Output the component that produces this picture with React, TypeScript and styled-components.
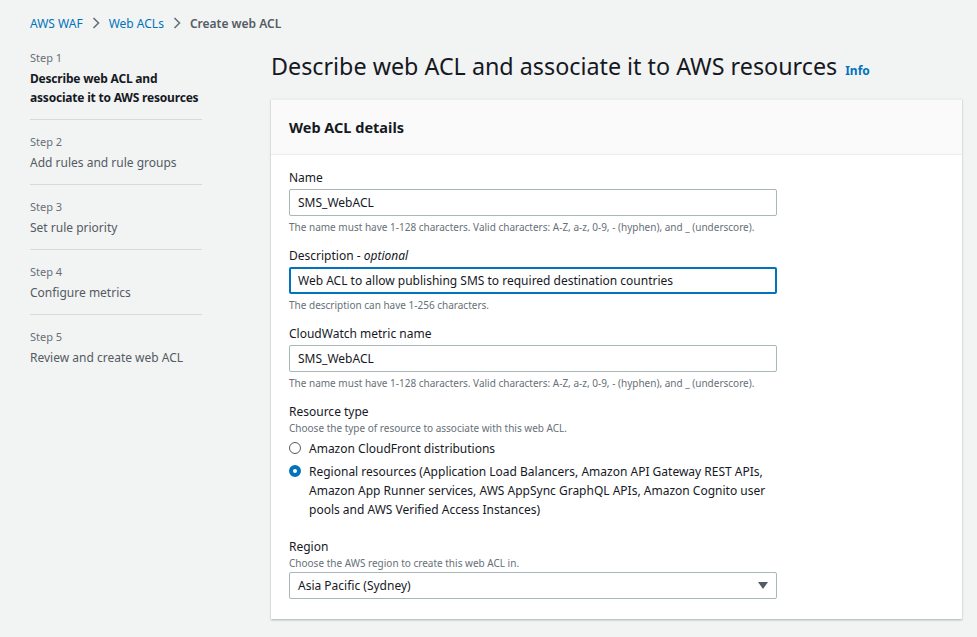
import React from 'react'
import styled, { createGlobalStyle } from 'styled-components'

const Global = createGlobalStyle`
  body { margin: 0; background: #f2f3f3; font-family: "Noto Sans", "Open Sans", sans-serif; color: #16191f; }
`

const Page = styled.div`
  width: 977px;
  height: 637px;
  overflow: hidden;
  padding: 14px 0 0 30px;
  box-sizing: border-box;
`

const Crumbs = styled.nav`
  display: flex;
  align-items: center;
  gap: 9px;
  font-size: 12px;
  height: 18px;
`

const Crumb = styled.span<{ $current?: boolean }>`
  color: ${({ $current }) => ($current ? '#545b64' : '#0073bb')};
  font-weight: ${({ $current }) => ($current ? 600 : 400)};
`

const Body = styled.div`
  display: flex;
  margin-top: 16px;
`

const Side = styled.aside`
  width: 172px;
  margin-right: 69px;
  flex-shrink: 0;
`

const StepItem = styled.div<{ $last?: boolean }>`
  padding: 2px 0 ${({ $last }) => ($last ? 0 : '12px')};
  margin-bottom: 12px;
  border-bottom: ${({ $last }) => ($last ? 'none' : '1px solid #d5dbdb')};
`

const StepNum = styled.div`
  font-size: 11px;
  color: #687078;
  line-height: 16px;
  margin-bottom: 3px;
`

const StepName = styled.div<{ $active?: boolean }>`
  font-size: 12px;
  line-height: 19px;
  color: ${({ $active }) => ($active ? '#16191f' : '#545b64')};
  font-weight: ${({ $active }) => ($active ? 700 : 400)};
  letter-spacing: ${({ $active }) => ($active ? '-0.2px' : '0')};
`

const Main = styled.main`
  flex: 1;
  padding-right: 15px;
`

const Title = styled.h1`
  margin: 2px 0 12px;
  font-size: 23.3px;
  font-weight: 400;
  line-height: 32px;
  display: flex;
  align-items: baseline;
  gap: 8px;
`

const Info = styled.span`
  font-size: 12px;
  font-weight: 700;
  color: #0073bb;
`

const Card = styled.section`
  background: #fff;
  box-shadow: 0 1px 2px rgba(0, 28, 36, 0.3);
  border-top: 1px solid #eaeded;
`

const CardHead = styled.header`
  background: #fafafa;
  border-bottom: 1px solid #eaeded;
  height: 54px;
  display: flex;
  align-items: center;
  padding: 0 18px;
  font-size: 14.5px;
  font-weight: 700;
`

const CardBody = styled.div`
  padding: 14px 18px 16px;
  display: flex;
  flex-direction: column;
  gap: 13px;
`

const Field = styled.div`
  width: 488px;
`

const Label = styled.div`
  font-size: 12px;
  line-height: 18px;
  margin-bottom: 0;
  em { font-style: italic; }
`

const Hint = styled.div`
  font-size: 10px;
  color: #687078;
  line-height: 14px;
`

const Input = styled.div<{ $focus?: boolean }>`
  box-sizing: border-box;
  height: 27px;
  border: ${({ $focus }) => ($focus ? '2px solid #0073bb' : '1px solid #aab7b8')};
  border-radius: 2px;
  display: flex;
  align-items: center;
  justify-content: space-between;
  padding: 0 ${({ $focus }) => ($focus ? '7px' : '8px')};
  font-size: 12px;
  margin: 2px 0 4px;
`

const Radio = styled.label`
  display: flex;
  gap: 8px;
  font-size: 12px;
  line-height: 19px;
  margin-top: 4px;
`

const Dot = styled.span<{ $on?: boolean }>`
  width: 12px;
  height: 12px;
  margin-top: 3px;
  border-radius: 50%;
  flex-shrink: 0;
  box-sizing: border-box;
  border: ${({ $on }) => ($on ? '4px solid #0073bb' : '1px solid #545b64')};
  background: #fff;
`

export default function App() {
  return (
    <Page>
      <Global />
      <Crumbs>
        <Crumb>AWS WAF</Crumb>
        <svg width="8" height="12" viewBox="0 0 8 12"><path d="M1.5 1l5 5-5 5" stroke="#687078" strokeWidth="1.6" fill="none" /></svg>
        <Crumb>Web ACLs</Crumb>
        <svg width="8" height="12" viewBox="0 0 8 12"><path d="M1.5 1l5 5-5 5" stroke="#687078" strokeWidth="1.6" fill="none" /></svg>
        <Crumb $current>Create web ACL</Crumb>
      </Crumbs>
      <Body>
        <Side>
          <StepItem>
            <StepNum>Step 1</StepNum>
            <StepName $active>Describe web ACL and associate it to AWS resources</StepName>
          </StepItem>
          <StepItem>
            <StepNum>Step 2</StepNum>
            <StepName>Add rules and rule groups</StepName>
          </StepItem>
          <StepItem>
            <StepNum>Step 3</StepNum>
            <StepName>Set rule priority</StepName>
          </StepItem>
          <StepItem>
            <StepNum>Step 4</StepNum>
            <StepName>Configure metrics</StepName>
          </StepItem>
          <StepItem $last>
            <StepNum>Step 5</StepNum>
            <StepName>Review and create web ACL</StepName>
          </StepItem>
        </Side>
        <Main>
          <Title>Describe web ACL and associate it to AWS resources <Info>Info</Info></Title>
          <Card>
            <CardHead>Web ACL details</CardHead>
            <CardBody>
              <Field>
                <Label>Name</Label>
                <Input>SMS_WebACL</Input>
                <Hint>The name must have 1-128 characters. Valid characters: A-Z, a-z, 0-9, - (hyphen), and _ (underscore).</Hint>
              </Field>
              <Field>
                <Label>Description - <em>optional</em></Label>
                <Input $focus>Web ACL to allow publishing SMS to required destination countries</Input>
                <Hint>The description can have 1-256 characters.</Hint>
              </Field>
              <Field>
                <Label>CloudWatch metric name</Label>
                <Input>SMS_WebACL</Input>
                <Hint>The name must have 1-128 characters. Valid characters: A-Z, a-z, 0-9, - (hyphen), and _ (underscore).</Hint>
              </Field>
              <Field>
                <Label>Resource type</Label>
                <Hint>Choose the type of resource to associate with this web ACL.</Hint>
                <Radio><Dot />Amazon CloudFront distributions</Radio>
                <Radio><Dot $on />Regional resources (Application Load Balancers, Amazon API Gateway REST APIs, Amazon App Runner services, AWS AppSync GraphQL APIs, Amazon Cognito user pools and AWS Verified Access Instances)</Radio>
              </Field>
              <Field style={{ marginTop: 6 }}>
                <Label>Region</Label>
                <Hint>Choose the AWS region to create this web ACL in.</Hint>
                <Input>
                  Asia Pacific (Sydney)
                  <svg width="10" height="8" viewBox="0 0 10 8"><path d="M0 0h10L5 7z" fill="#545b64" /></svg>
                </Input>
              </Field>
            </CardBody>
          </Card>
        </Main>
      </Body>
    </Page>
  )
}
